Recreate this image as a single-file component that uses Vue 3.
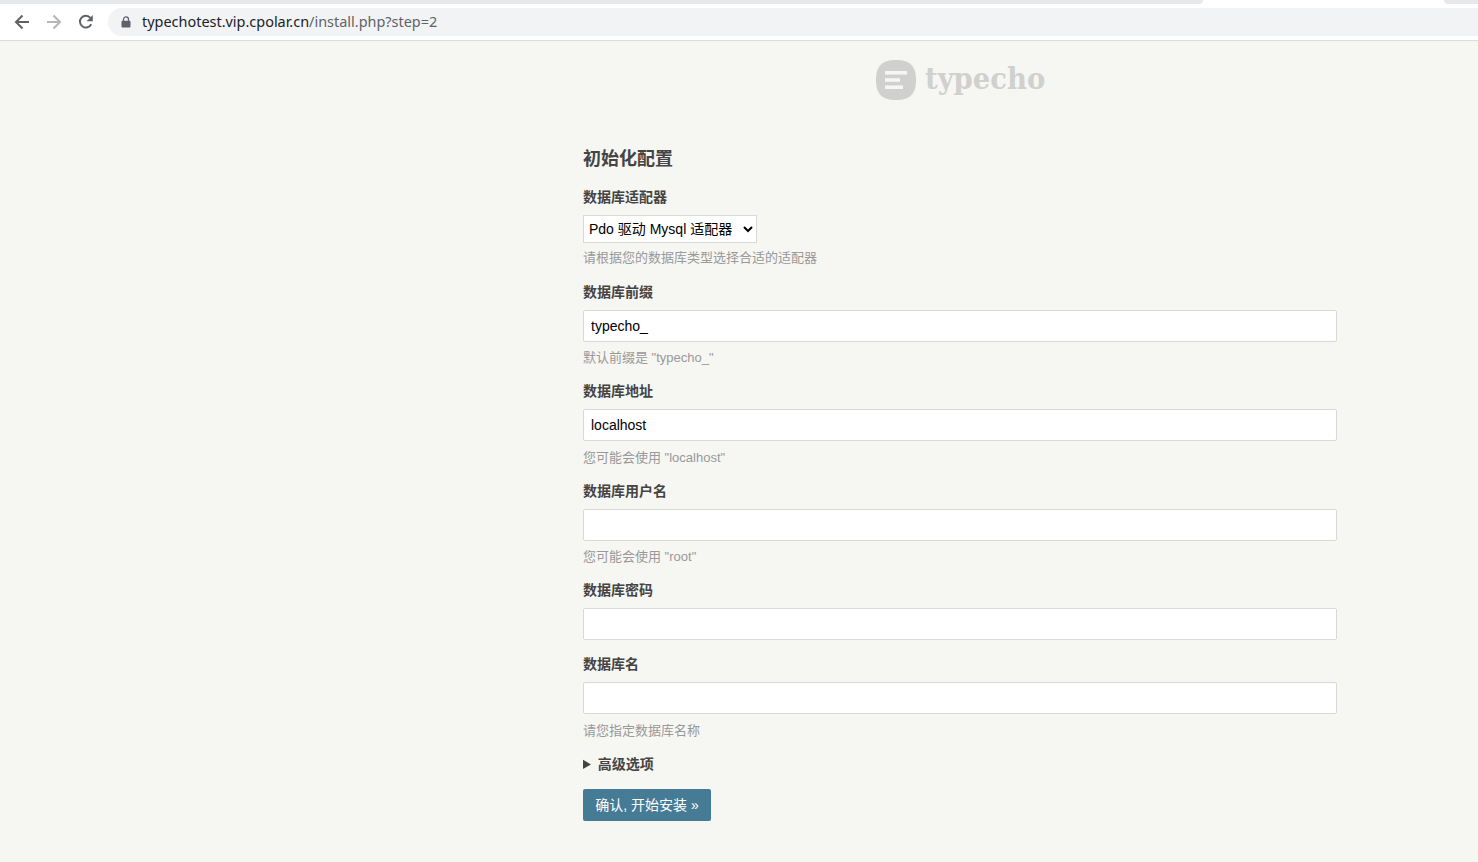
<script setup>
const rows = [
  { label: '数据库前缀', value: 'typecho_', help: '默认前缀是 "typecho_"' },
  { label: '数据库地址', value: 'localhost', help: '您可能会使用 "localhost"' },
  { label: '数据库用户名', value: '', help: '您可能会使用 "root"' },
  { label: '数据库密码', value: '', help: '' },
  { label: '数据库名', value: '', help: '请您指定数据库名称' },
]
</script>

<template>
  <div class="page">
    <header class="chrome">
      <div class="tabstrip">
        <div class="tab-left"></div>
        <div class="tab-active"></div>
        <div class="tab-right"></div>
      </div>
      <div class="toolbar">
        <svg class="nav" viewBox="0 0 16 16" width="16" height="16">
          <path d="M15 8H2.5M8.5 1.5 2 8l6.5 6.5" fill="none" stroke="#5f6368" stroke-width="2"/>
        </svg>
        <svg class="nav" viewBox="0 0 16 16" width="16" height="16">
          <path d="M1 8h12.5M7.5 1.5 14 8l-6.5 6.5" fill="none" stroke="#b4b6b9" stroke-width="2"/>
        </svg>
        <svg class="nav" viewBox="0 0 16 16" width="16" height="16">
          <path d="M13.2 10.2A5.9 5.9 0 1 1 12.4 3.8" fill="none" stroke="#5f6368" stroke-width="2"/>
          <path d="M14.8 1v6.2H8.6z" fill="#5f6368"/>
        </svg>
        <div class="omnibox">
          <svg class="lock" viewBox="0 0 10 12" width="10" height="12">
            <path d="M2.5 5V3.4a2.5 2.5 0 0 1 5 0V5" fill="none" stroke="#5f6368" stroke-width="1.3"/>
            <rect x="0.5" y="4.8" width="9" height="6.7" rx="1" fill="#5f6368"/>
          </svg>
          <span class="url"><span class="host">typechotest.vip.cpolar.cn</span>/install.php?step=2</span>
        </div>
      </div>
    </header>

    <main class="content">
      <div class="logo">
        <svg viewBox="0 0 40 40" width="40" height="40">
          <path d="M20 0C33 0 40 5 40 20S33 40 20 40 0 35 0 20 7 0 20 0z" fill="#d0d0ce"/>
          <rect x="9" y="11" width="22" height="3.6" fill="#f6f6f3"/>
          <rect x="9" y="18.2" width="15" height="3.6" fill="#f6f6f3"/>
          <rect x="9" y="25.4" width="18" height="3.6" fill="#f6f6f3"/>
        </svg>
        <span class="logo-text">typecho</span>
      </div>

      <form class="form" @submit.prevent>
        <h1 class="title">初始化配置</h1>

        <div class="row row-first">
          <label class="label">数据库适配器</label>
          <select class="select">
            <option>Pdo 驱动 Mysql 适配器</option>
          </select>
          <p class="help">请根据您的数据库类型选择合适的适配器</p>
        </div>

        <div v-for="row in rows" :key="row.label" class="row">
          <label class="label">{{ row.label }}</label>
          <input class="input" type="text" :value="row.value" />
          <p v-if="row.help" class="help">{{ row.help }}</p>
        </div>

        <details class="advanced">
          <summary>高级选项</summary>
        </details>

        <button class="btn" type="submit">确认, 开始安装 »</button>
      </form>
    </main>
  </div>
</template>

<style>
html, body { margin: 0; background: #f6f6f3; overflow: hidden; }
</style>

<style scoped>
.page {
  height: 862px;
  background: #f6f6f3;
  font-family: "Liberation Sans", "Noto Sans CJK SC", sans-serif;
  color: #444;
  font-size: 14px;
}
.chrome { background: #fff; border-bottom: 1px solid #d9dbde; height: 40px; box-sizing: content-box; }
.tabstrip { display: flex; height: 4px; }
.tab-left { width: 1203px; background: #e6e8eb; border-bottom-right-radius: 6px; }
.tab-active { flex: 1; background: #fff; }
.tab-right { width: 34px; background: #e6e8eb; border-bottom-left-radius: 6px; }
.toolbar { display: flex; align-items: flex-start; padding: 4px 0 0 14px; }
.nav { margin: 6px 16px 0 0; flex: none; }
.toolbar .nav:nth-child(3) { margin-right: 14px; }
.omnibox {
  flex: 1;
  height: 28px;
  background: #f1f3f4;
  border-radius: 14px 0 0 14px;
  display: flex;
  align-items: center;
  padding-left: 13px;
}
.lock { flex: none; margin-right: 11px; }
.url { font-family: "Noto Sans", sans-serif; font-size: 14.45px; line-height: 26px; margin-bottom: 1px; color: #5f6368; white-space: nowrap; }
.host { color: #202124; }

.content { width: 754px; margin-left: 583px; }
.logo { display: flex; align-items: center; gap: 9px; padding: 19px 0 0 293px; height: 40px; }
.logo-text {
  font-family: "DejaVu Serif", serif;
  font-stretch: condensed;
  font-weight: 700;
  font-size: 30.5px;
  line-height: 38px;
  margin-bottom: 4px;
  color: #d0d0ce;
}
.form { display: block; }
.title { margin: 46px 0 15px; font-size: 18px; line-height: 26px; font-weight: 700; color: #444; }
.row { margin-bottom: 14px; }
.row-first { margin-bottom: 14.3px; }
.row-first .help { margin-top: 5px; line-height: 19.5px; }
.label { display: block; font-weight: 700; line-height: 20px; margin-bottom: 8px; }
.select {
  display: block;
  width: 174px;
  height: 28px;
  box-sizing: border-box;
  border: 1px solid #d9d9d6;
  border-radius: 0;
  padding-left: 1px;
  background: #fff;
  color: #000;
  font: 14px "Liberation Sans", "Noto Sans CJK SC", sans-serif;
  outline: none;
}
.input {
  display: block;
  width: 100%;
  height: 32px;
  box-sizing: border-box;
  border: 1px solid #d9d9d6;
  border-radius: 2px;
  padding: 0 7px;
  background: #fff;
  color: #000;
  font: 14px "Liberation Sans", "Noto Sans CJK SC", sans-serif;
  outline: none;
}
.help { margin: 6.5px 0 0; font-size: 13px; line-height: 19px; color: #999; }
.advanced { font-weight: 700; line-height: 20px; margin-bottom: 15px; }
.advanced summary { cursor: pointer; }
.btn {
  display: block;
  width: 128px;
  height: 32px;
  padding: 0 0 2px;
  border: 0;
  border-radius: 2px;
  background: #467b96;
  color: #fff;
  font: 14px "Liberation Sans", "Noto Sans CJK SC", sans-serif;
}
</style>
